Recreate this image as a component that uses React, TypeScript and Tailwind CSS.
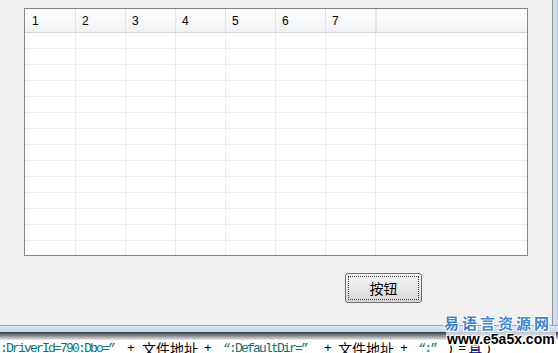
const cols = ["1", "2", "3", "4", "5", "6", "7"];
const rows = Array.from({ length: 14 }, (_, i) => i);

const mono = "font-['Liberation_Mono'] text-[13px] tracking-[-1.8px]";
const cjk = "font-['Noto_Sans_CJK_SC'] text-[14px]";

export default function App() {
  return (
    <div className="relative flex h-[353px] w-[558px] flex-col overflow-hidden bg-[#f0f0f0] font-['Liberation_Sans','Noto_Sans_CJK_SC',sans-serif]">
      <div className="flex h-[325px]">
        <div className="flex-1 bg-[#f0f0f0] pl-[24px] pt-[8px]">
          {/* 超级列表框 */}
          <div className="flex h-[248px] w-[504px] flex-col overflow-hidden border border-[#828790] bg-white">
            <div className="flex h-[24px] shrink-0 border-b border-[#d5d5d5] bg-gradient-to-b from-white to-[#f0f1f3] pl-px">
              {cols.map((c) => (
                <div
                  key={c}
                  className="flex w-[50px] items-center border-r border-[#e2e3e5] pl-[6px] text-[12px] text-black"
                >
                  {c}
                </div>
              ))}
              <div className="flex-1 border-l border-[#e2e3e5]" />
            </div>
            {rows.map((r) => (
              <div key={r} className="flex h-[16px] shrink-0 border-b border-[#ededed] pl-px">
                {cols.map((c) => (
                  <div key={c} className="w-[50px] border-r border-[#ededed]" />
                ))}
                <div className="flex-1" />
              </div>
            ))}
          </div>
          <div className="flex pl-[321px] pt-[17px]">
            <button className="flex h-[30px] w-[77px] items-center justify-center rounded-[3px] border border-[#707070] bg-gradient-to-b from-[#f4f4f4] via-[#e8e8e8] to-[#d6d6d6] p-[2px]">
              <span className="flex h-full w-full items-center justify-center border border-dotted border-[#333] font-['Noto_Sans_CJK_SC'] text-[14px] text-black">
                按钮
              </span>
            </button>
          </div>
        </div>
        <div className="w-[6px] border-l border-[#8b8f96] bg-gradient-to-r from-[#d6e3f3] to-[#c3d6ee]" />
      </div>

      {/* 窗口下边框 */}
      <div className="h-[7px] border-t border-[#9aa8b8] bg-gradient-to-b from-[#dbe7f5] to-[#c3d6ee]" />
      <div className="h-px bg-[#3a4550]" />
      <div className="h-[7px] bg-gradient-to-b from-[#505050] to-[#ececec]" />

      {/* 代码行 */}
      <div className="flex h-[13px] items-start overflow-hidden whitespace-pre bg-white pt-[1px] leading-[15px] text-black">
        <span className={`${mono} text-[#0b7272]`}>:DriverId=790:Dbo=”</span>
        <span className={`${mono} ml-[13px]`}>+</span>
        <span className={`${cjk} ml-[9px]`}>文件地址</span>
        <span className={`${mono} ml-[6px]`}>+</span>
        <span className={`${mono} ml-[13px] text-[#0b7272]`}>“:DefaultDir=”</span>
        <span className={`${mono} ml-[17px]`}>+</span>
        <span className={`${cjk} ml-[8px]`}>文件地址</span>
        <span className={`${mono} ml-[6px]`}>+</span>
        <span className={`${mono} ml-[12px] text-[#0b7272]`}>“:”</span>
        <span className={`${mono} ml-[10px]`}>)</span>
        <span className={`${mono} ml-[6px]`}>=</span>
        <span className={`${cjk} ml-[4px] text-[#000080]`}>真</span>
        <span className={`${mono} ml-[2px]`}>)</span>
      </div>

      {/* 水印 */}
      <div className="absolute left-[444px] top-[314px] flex flex-col items-start">
        <span className="font-['Noto_Sans_CJK_SC',sans-serif] text-[15px] font-bold leading-[18px] tracking-[3px] text-[#3b84d6] [text-shadow:1px_1px_0_#fff,-1px_-1px_0_#fff,1px_-1px_0_#fff,-1px_1px_0_#fff]">
          易语言资源网
        </span>
        <span className="ml-[2px] bg-white/70 px-px text-[14px] font-bold leading-[14px] text-black [text-shadow:1px_1px_0_#fff,-1px_-1px_0_#fff]">
          www.e5a5x.com
        </span>
      </div>
    </div>
  );
}
